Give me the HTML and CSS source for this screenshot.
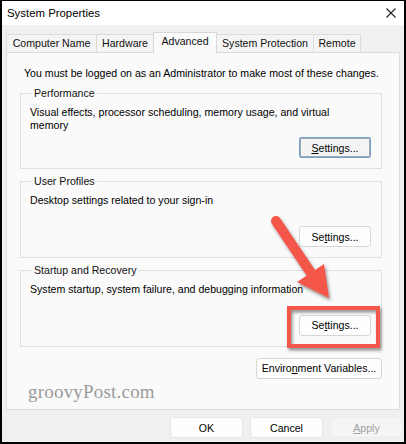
FILE: index.html
```html
<!DOCTYPE html>
<html>
<head>
<meta charset="utf-8">
<link rel="stylesheet" href="styles.css">
</head>
<body>
<div class="window">
  <div class="titlebar">
    <span class="title">System Properties</span>
    <svg class="close" width="10" height="10" viewBox="0 0 10 10"><path d="M0.5 0.5 L9.5 9.5 M9.5 0.5 L0.5 9.5" stroke="#222" stroke-width="1.1" fill="none"/></svg>
  </div>
  <div class="tabs">
    <div class="tab t1">Computer Name</div>
    <div class="tab t2">Hardware</div>
    <div class="tab t3 active">Advanced</div>
    <div class="tab t4">System Protection</div>
    <div class="tab t5">Remote</div>
  </div>
  <div class="panel">
    <p class="admin">You must be logged on as an Administrator to make most of these changes.</p>
    <fieldset class="group">
      <legend>Performance</legend>
      <p class="desc">Visual effects, processor scheduling, memory usage, and virtual memory</p>
      <div class="btnrow"><button class="btn focus"><u>S</u>ettings...</button></div>
    </fieldset>
    <fieldset class="group">
      <legend>User Profiles</legend>
      <p class="desc">Desktop settings related to your sign-in</p>
      <div class="btnrow tall"><button class="btn">Se<u>t</u>tings...</button></div>
    </fieldset>
    <fieldset class="group">
      <legend>Startup and Recovery</legend>
      <p class="desc">System startup, system failure, and debugging information</p>
      <div class="btnrow tall"><button class="btn">Se<u>t</u>tings...</button></div>
    </fieldset>
    <div class="envrow"><button class="btn env">Enviro<u>n</u>ment Variables...</button></div>
    <div class="watermark">groovyPost.com</div>
  </div>
  <div class="footer">
    <button class="btn fbtn">OK</button>
    <button class="btn fbtn">Cancel</button>
    <button class="btn fbtn disabled"><u>A</u>pply</button>
  </div>
  <svg class="overlay" width="406" height="444" viewBox="0 0 406 444">
    <defs>
      <filter id="sh" x="-20%" y="-20%" width="150%" height="150%">
        <feDropShadow dx="1.5" dy="2.5" stdDeviation="1.5" flood-color="#3a3a3a" flood-opacity="0.55"/>
      </filter>
    </defs>
    <g filter="url(#sh)">
      <line x1="276" y1="221" x2="311" y2="273" stroke="#f4564a" stroke-width="10" stroke-linecap="round"/>
      <polygon points="297,282 329,298 324,264" fill="#f4564a"/>
      <rect x="289" y="308" width="89" height="38" fill="none" stroke="#f4564a" stroke-width="4"/>
    </g>
  </svg>
</div>
</body>
</html>
```

FILE: styles.css
```css
* { box-sizing: border-box; }
html, body { margin: 0; padding: 0; background: #ffffff; }
.window {
  position: relative;
  width: 406px;
  height: 444px;
  border: 2px solid #000;
  border-top-width: 1px;
  background: #f0f0f0;
  font-family: "Liberation Sans", Arial, sans-serif;
  font-size: 10.6px;
  color: #000;
  overflow: hidden;
}
.titlebar {
  height: 24px;
  background: #fff;
  display: flex;
  align-items: center;
  justify-content: space-between;
  padding: 0 8px 0 5px;
}
.title { font-size: 11.4px; color: #000; }
.close { display: block; margin-top: -1px; }
.tabs {
  height: 27px;
  display: flex;
  align-items: flex-end;
  padding-left: 4px;
}
.tab {
  height: 18px;
  line-height: 17px;
  border: 1px solid #dcdcdc;
  border-bottom: none;
  background: #f4f4f4;
  text-align: center;
  margin-right: -1px;
  color: #111;
}
.t1 { width: 91px; }
.t2 { width: 58px; }
.t3 { width: 64px; }
.t4 { width: 98px; }
.t5 { width: 48px; }
.tab.active {
  height: 21px;
  line-height: 17px;
  background: #fafafa;
  position: relative;
  z-index: 1;
  margin-bottom: -1px;
  border-color: #d8d8d8;
}
.panel {
  margin: 0 4px;
  height: 358px;
  background: #fafafa;
  border: 1px solid #dcdcdc;
  padding: 14px 17px 0 13px;
}
.admin {
  margin: 0 0 7px 4px;
  line-height: 13px;
}
.group {
  margin: 0 0 6px 0;
  padding: 6px 10px 10px 9px;
  border: 1px solid #e0e0e0;
  min-width: 0;
}
.group legend {
  padding: 0 2px;
  margin-left: 2px;
  line-height: 13px;
  color: #111;
}
.desc {
  margin: 0;
  line-height: 12.7px;
  padding-right: 20px;
}
.btnrow {
  display: flex;
  justify-content: flex-end;
  margin-top: 6px;
}
.btnrow.tall { margin-top: 19px; }
.btn {
  font-family: "Liberation Sans", Arial, sans-serif;
  font-size: 10.6px;
  color: #000;
  width: 72px;
  height: 21px;
  padding: 0;
  background: #fdfdfd;
  border: 1px solid #d6d6d6;
  border-radius: 3px;
}
.btn u { text-decoration-thickness: 1px; text-underline-offset: 1px; }
.btn.focus {
  background: #f4f4f4;
  border: 1px solid #6fa1d8;
  border-radius: 2px;
  box-shadow: inset 0 0 0 1px #a9a9a9;
}
.envrow {
  display: flex;
  justify-content: flex-end;
  margin-top: 11px;
}
.btn.env { width: 126px; }
.watermark {
  margin-top: 3px;
  margin-left: 8px;
  font-family: "Liberation Serif", "Times New Roman", serif;
  font-size: 19px;
  line-height: 20px;
  color: #9a9a9a;
  letter-spacing: 0.2px;
}
.footer {
  display: flex;
  justify-content: flex-end;
  gap: 7px;
  padding-right: 1px;
  margin-top: 7px;
}
.btn.fbtn { width: 73px; border-color: #e6e6e6; background: #fefefe; }
.btn.disabled { color: #a2a2a2; background: #f5f5f5; border-color: #ececec; }
.overlay {
  position: absolute;
  left: -2px;
  top: -1px;
  pointer-events: none;
}
```
